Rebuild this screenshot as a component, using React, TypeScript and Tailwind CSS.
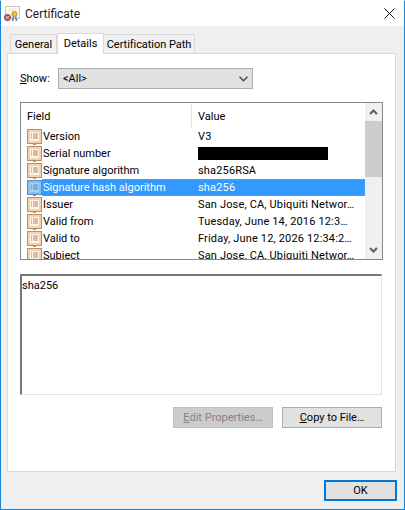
const rows = [
  { f: "Version", v: "V3" },
  { f: "Serial number", v: "", redacted: true },
  { f: "Signature algorithm", v: "sha256RSA" },
  { f: "Signature hash algorithm", v: "sha256", selected: true },
  { f: "Issuer", v: "San Jose, CA, Ubiquiti Networ…" },
  { f: "Valid from", v: "Tuesday, June 14, 2016 12:3…" },
  { f: "Valid to", v: "Friday, June 12, 2026 12:34:2…" },
  { f: "Subject", v: "San Jose, CA, Ubiquiti Networ…" },
];

function FieldIcon({ selected }: { selected?: boolean }) {
  const stroke = selected ? "#5f8cb8" : "#bb8f63";
  const fill = selected ? "#8fbce8" : "#f3d3ae";
  const inner = selected ? "#a9d0f5" : "#fdf3e6";
  const line = selected ? "#4a86c4" : "#b08a66";
  return (
    <svg width="15" height="16" viewBox="0 0 15 16" className="shrink-0">
      <rect x="0.5" y="0.5" width="14" height="14" fill={fill} stroke={stroke} />
      <rect x="2.5" y="2.5" width="10" height="10" fill={inner} stroke={fill} />
      <path d="M4 5h1M6 5h5M4 7h1M6 7h5M4 9h1M6 9h5" stroke={line} />
      <path d="M6 15.5h3" stroke={stroke} />
    </svg>
  );
}

function CertIcon() {
  return (
    <svg width="17" height="17" viewBox="0 0 17 17" className="shrink-0 mt-[2px]">
      <rect x="1.5" y="0.5" width="14" height="12" fill="#fbfaf6" stroke="#cfc7b2" />
      <path d="M4 3h9M4 5h6" stroke="#e6e0d0" />
      <path d="M9.5 10l-1 5M11.5 10l1 5" stroke="#4a79c4" strokeWidth="1.4" />
      <circle cx="10.5" cy="8" r="2.6" fill="#eebc3a" stroke="#c4962a" />
      <circle cx="3.5" cy="11.5" r="3.1" fill="#d8434a" stroke="#8c4a50" />
      <path d="M2.3 10.3l2.4 2.4M4.7 10.3l-2.4 2.4" stroke="#fff" />
    </svg>
  );
}

export default function App() {
  return (
    <div className="w-[405px] h-[510px] bg-[#efefef] border border-[#1883d7] border-t-white flex flex-col overflow-hidden text-[11px] text-black font-['Roboto','Noto_Sans',sans-serif]">
      <div className="h-[25px] bg-white flex items-center pl-[3px] shrink-0">
        <CertIcon />
        <span className="ml-[4px] text-[12px] text-[#1a1a1a]">Certificate</span>
        <svg width="11" height="11" viewBox="0 0 11 11" className="ml-auto mr-[9px]">
          <path d="M0.5 0.5l10 10M10.5 0.5l-10 10" stroke="#111" fill="none" />
        </svg>
      </div>

      <div className="flex-1 flex flex-col pl-[6px] pr-[7px]">
        <div className="flex h-[27px] items-end pl-[3px] shrink-0 relative z-10 whitespace-nowrap">
          <div className="h-[19px] w-[47px] bg-[#f0f0f0] border border-b-0 border-[#d9d9d9] flex items-center justify-center pt-[2px]">General</div>
          <div className="h-[21px] w-[47px] bg-white border border-b-0 border-[#d9d9d9] -mb-[1px] flex items-center justify-center">Details</div>
          <div className="h-[19px] w-[91px] bg-[#f0f0f0] border border-l-0 border-b-0 border-[#d9d9d9] flex items-center justify-center pt-[2px] tracking-[-0.05px]">Certification Path</div>
        </div>

        <div className="w-[389px] h-[419px] bg-white border border-[#d9d9d9] flex flex-col px-[12px] pt-[14px]">
          <div className="flex items-center h-[21px] shrink-0">
            <span className="w-[38px] pt-[1px]"><u>S</u>how:</span>
            <div className="w-[195px] h-[21px] bg-[#e1e1e1] border border-[#adadad] flex items-center pl-[4px] pt-[1px]">
              <span>&lt;All&gt;</span>
              <svg width="9" height="6" viewBox="0 0 9 6" className="ml-auto mr-[4px]">
                <path d="M0.5 0.8L4.5 4.8L8.5 0.8" stroke="#444" strokeWidth="1.3" fill="none" />
              </svg>
            </div>
          </div>

          <div className="mt-[13px] w-[363px] h-[158px] border border-[#828790] flex shrink-0 overflow-hidden">
            <div className="flex-1 min-w-0 flex flex-col">
              <div className="h-[25px] flex shrink-0">
                <div className="w-[171px] pl-[6px] flex items-center border-r border-[#e5e5e5] pt-[3px]">Field</div>
                <div className="flex-1 pl-[6px] flex items-center pt-[3px]">Value</div>
              </div>
              <div className="flex flex-col overflow-hidden">
                {rows.map((r) => (
                  <div key={r.f} className={`h-[17px] shrink-0 flex items-center ${r.selected ? "text-white" : ""}`}>
                    <div className="w-[21px] pl-[6px] shrink-0 flex"><FieldIcon selected={r.selected} /></div>
                    <div className={`flex-1 flex h-full items-center ${r.selected ? "bg-[#3399ff] outline-1 -outline-offset-1 outline-dotted outline-[#c98a3d]" : ""}`}>
                      <div className="w-[156px] pl-[1px] pt-[2px] whitespace-nowrap">{r.f}</div>
                      <div className={`flex-1 whitespace-nowrap tracking-[0.16px] ${r.redacted ? "" : "pt-[2px]"}`}>
                        {r.redacted ? <div className="w-[130px] h-[13px] bg-black" /> : r.v}
                      </div>
                    </div>
                  </div>
                ))}
              </div>
            </div>
            <div className="w-[17px] bg-[#f0f0f0] flex flex-col shrink-0">
              <div className="h-[18px] flex items-center justify-center">
                <svg width="9" height="6" viewBox="0 0 9 6"><path d="M1 5L4.5 1.5L8 5" stroke="#606060" strokeWidth="2" fill="none" /></svg>
              </div>
              <div className="h-[56px] bg-[#cdcdcd]" />
              <div className="flex-1 flex items-end justify-center pb-[6px]">
                <svg width="9" height="6" viewBox="0 0 9 6"><path d="M1 1L4.5 4.5L8 1" stroke="#606060" strokeWidth="2" fill="none" /></svg>
              </div>
            </div>
          </div>

          <div className="mt-[14px] w-[362px] h-[121px] border-2 border-[#787878] border-r border-b border-r-[#e3e3e3] border-b-[#e3e3e3] pt-[2px] shrink-0">sha256</div>

          <div className="mt-[12px] flex justify-end gap-[9px] w-[362px] shrink-0">
            <div className="w-[100px] h-[21px] bg-[#cccccc] border border-[#bfbfbf] text-[#838383] flex items-center justify-center pt-[2px]"><span><u>E</u>dit Properties…</span></div>
            <div className="w-[100px] h-[21px] bg-[#e1e1e1] border border-[#adadad] flex items-center justify-center pt-[2px]"><span><u>C</u>opy to File…</span></div>
          </div>
        </div>

        <div className="flex justify-end mt-[8px]">
          <div className="w-[73px] h-[21px] bg-[#e1e1e1] border-2 border-[#0078d7] flex items-center justify-center pt-[2px]">OK</div>
        </div>
      </div>
    </div>
  );
}
